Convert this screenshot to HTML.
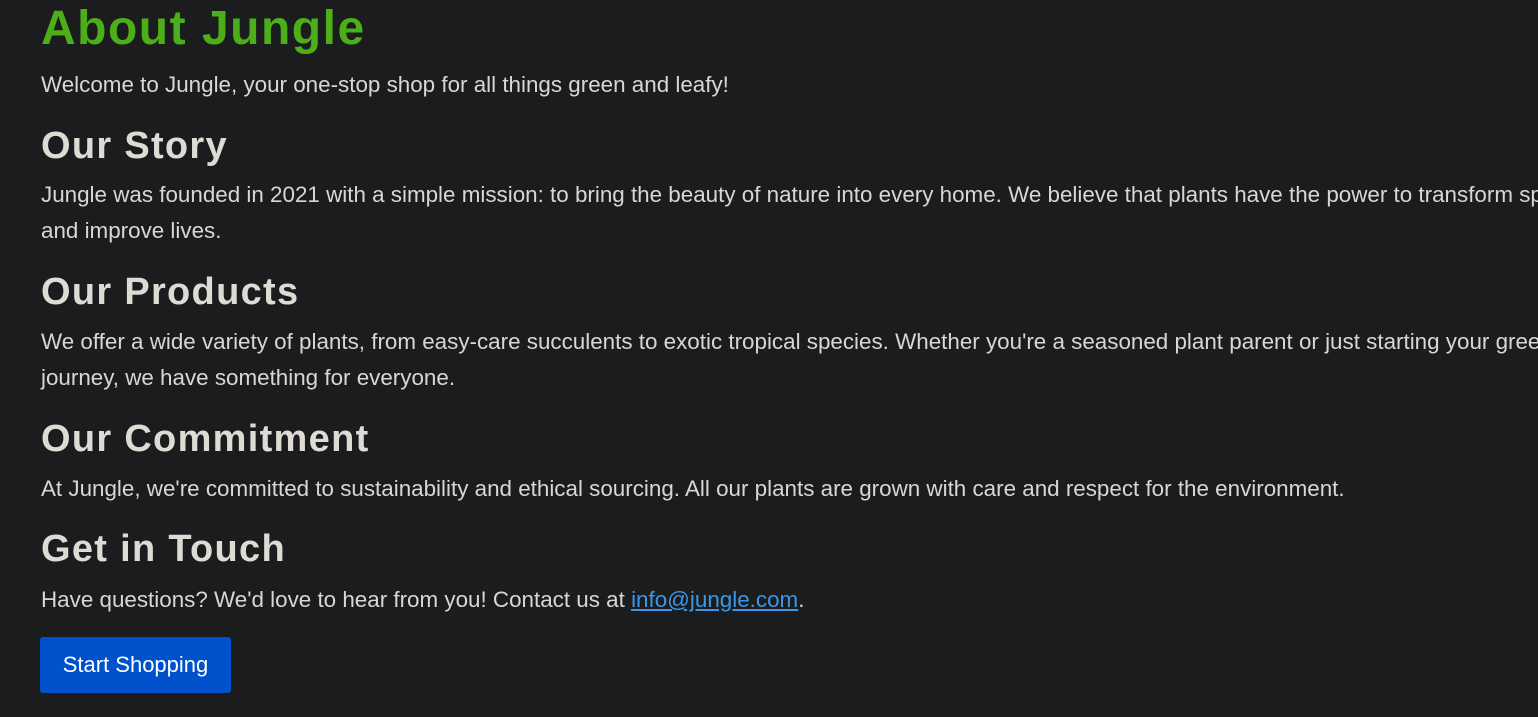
<!DOCTYPE html>
<html><head><meta charset="utf-8"><style>
html,body{margin:0;padding:0;width:1538px;height:717px;overflow:hidden;background:#1b1c1e;}
body{font-family:"Liberation Sans",sans-serif;color:#d9d7d1;position:relative;}
.t{position:absolute;left:41px;white-space:nowrap;margin:0;}
h1{font-size:48px;color:#4caf1a;font-weight:bold;line-height:56px;letter-spacing:1.5px;}
h2{font-size:38px;font-weight:bold;line-height:46px;color:#dedbd4;letter-spacing:1.3px;}
p{font-size:22.4px;line-height:36px;}
a{color:#3b97e6;}
.btn{position:absolute;left:40px;top:637px;width:191px;height:56px;background:#0052cc;border-radius:3px;color:#fff;font-size:22px;line-height:56px;text-align:center;}
</style></head><body>
<h1 class="t" style="top:1px">About Jungle</h1>
<p class="t" style="top:67px">Welcome to Jungle, your one-stop shop for all things green and leafy!</p>
<h2 class="t" style="top:123px">Our Story</h2>
<p class="t" style="top:177px">Jungle was founded in 2021 with a simple mission: to bring the beauty of nature into every home. We believe that plants have the power to transform spaces<br>and improve lives.</p>
<h2 class="t" style="top:269px">Our Products</h2>
<p class="t" style="top:324px">We offer a wide variety of plants, from easy-care succulents to exotic tropical species. Whether you're a seasoned plant parent or just starting your green<br>journey, we have something for everyone.</p>
<h2 class="t" style="top:416px">Our Commitment</h2>
<p class="t" style="top:471px">At Jungle, we're committed to sustainability and ethical sourcing. All our plants are grown with care and respect for the environment.</p>
<h2 class="t" style="top:526px">Get in Touch</h2>
<p class="t" style="top:582px">Have questions? We'd love to hear from you! Contact us at <a href="#">info@jungle.com</a>.</p>
<div class="btn">Start Shopping</div>
</body></html>
